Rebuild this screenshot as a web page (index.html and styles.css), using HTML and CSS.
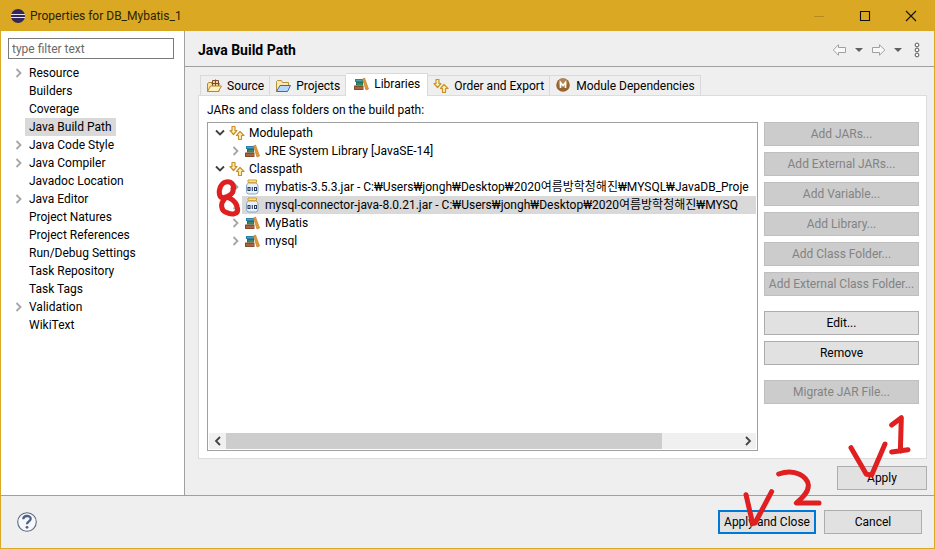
FILE: index.html
```html
<!DOCTYPE html>
<html lang="ko">
<head>
<meta charset="utf-8">
<title>Properties for DB_Mybatis_1</title>
<link rel="stylesheet" href="styles.css">
</head>
<body>
<svg class="defs" aria-hidden="true">
  <symbol id="closed" viewBox="0 0 8 10"><path d="M1.5 1l4 4-4 4" fill="none" stroke="#a6a6a6" stroke-width="1.8"/></symbol>
  <symbol id="open" viewBox="0 0 10 8"><path d="M1 1.5l4 4 4-4" fill="none" stroke="#404040" stroke-width="1.8"/></symbol>
  <symbol id="order" viewBox="0 0 16 16">
    <g fill="#fdf0b4" stroke="#c8922a" stroke-width="1.2" stroke-linejoin="round">
      <path d="M3 1.500h3v4h2L4.500 9.500 1 5.500h2z"/>
      <path d="M9.500 14.500h3v-4h2.500L11 6.500 7.500 10.500h2z"/>
    </g>
  </symbol>
  <symbol id="books" viewBox="0 0 16 16">
    <path d="M2 3h8v3H2z" fill="#2f7fa0"/><path d="M3 4.500h6" stroke="#4f9fb5"/>
    <path d="M3 6h7v3.500H3z" fill="#1f7350"/><path d="M4 8h5.500" stroke="#4f9c75"/>
    <path d="M1 9.500h9.500V14H1z" fill="#8a4c2d"/><path d="M2 12h8" stroke="#b98058"/>
    <path d="M9.500 3l2-1L15.500 13l-2.500 1z" fill="#e39a35" stroke="#c67c28" stroke-width=".7"/>
  </symbol>
  <symbol id="jar" viewBox="0 0 16 16">
    <path d="M4.500 4Q2.500 5 2.500 7v5.500Q2.500 15 5 15h6.500q2.500 0 2.500-2.500V7Q14 5 12 4z" fill="#e8f1fb" stroke="#8aa3c4"/>
    <path d="M4 1h8.500v2.400H4z" fill="#ffe79a" stroke="#cf9c32"/>
    <g fill="none" stroke="#23395f"><rect x="4" y="8.500" width="2" height="3"/><path d="M8.300 8V12"/><rect x="10.500" y="8.500" width="2" height="3"/></g>
  </symbol>
  <symbol id="source" viewBox="0 0 16 16">
    <path d="M1.500 13.500v-8l1.500-1h3l1 1h6v8z" fill="#fbe4a0" stroke="#b98532"/>
    <path d="M6.500 2.500h6v6h-6z" fill="#efd0a8" stroke="#7d4a2b"/><path d="M9.500 1.500v7M5.500 5.500h8" stroke="#7d4a2b"/>
    <path d="M1.500 13.500L4.500 8h11l-3.200 5.500z" fill="#fff0bd" stroke="#b98532"/>
  </symbol>
  <symbol id="projects" viewBox="0 0 16 16">
    <path d="M1.500 13.500v-10l1-1h4l1 2h6v3" fill="#fbe9b0" stroke="#b7903c"/>
    <path d="M1.500 13.500L5 7.500h10.500l-3 6z" fill="#b9d7f8" stroke="#3d68b8"/>
  </symbol>
  <symbol id="module" viewBox="0 0 16 16"><circle cx="8" cy="7" r="6.800" fill="#98632f"/><circle cx="8" cy="5" r="4.500" fill="#b58452"/><path d="M5.500 10V4.500L8 7.500l2.500-3V10" fill="none" stroke="#fff" stroke-width="1.600"/></symbol>
</svg>

<div class="window">
  <header class="titlebar">
    <svg class="logo" viewBox="0 0 14 14"><circle cx="7" cy="7" r="7" fill="#34285b"/><path d="M0 5.500h14M0 8.500h14" stroke="#e9e2ea" stroke-width="1.200"/></svg>
    <h1>Properties for DB_Mybatis_1</h1>
    <div class="winbtns">
      <button aria-label="Minimize" disabled><svg viewBox="0 0 12 12"><path d="M1 6.500h10" stroke="#b58a20"/></svg></button>
      <button aria-label="Maximize"><svg viewBox="0 0 12 12"><path d="M1.500 1.500h9v9h-9z" fill="none" stroke="#111" stroke-width="1.100"/></svg></button>
      <button aria-label="Close"><svg viewBox="0 0 12 12"><path d="M1 1l10 10M11 1L1 11" stroke="#111" stroke-width="1.100"/></svg></button>
    </div>
  </header>

  <div class="body">
    <nav class="sidebar">
      <input type="text" placeholder="type filter text" aria-label="Filter">
      <ul>
        <li><svg class="tw"><use href="#closed"/></svg><a href="#r">Resource</a></li>
        <li><a href="#b">Builders</a></li>
        <li><a href="#c">Coverage</a></li>
        <li><a class="current" href="#j">Java Build Path</a></li>
        <li><svg class="tw"><use href="#closed"/></svg><a href="#s">Java Code Style</a></li>
        <li><svg class="tw"><use href="#closed"/></svg><a href="#k">Java Compiler</a></li>
        <li><a href="#l">Javadoc Location</a></li>
        <li><svg class="tw"><use href="#closed"/></svg><a href="#e">Java Editor</a></li>
        <li><a href="#n">Project Natures</a></li>
        <li><a href="#p">Project References</a></li>
        <li><a href="#d">Run/Debug Settings</a></li>
        <li><a href="#t">Task Repository</a></li>
        <li><a href="#g">Task Tags</a></li>
        <li><svg class="tw"><use href="#closed"/></svg><a href="#v">Validation</a></li>
        <li><a href="#w">WikiText</a></li>
      </ul>
    </nav>

    <main>
      <div class="heading">
        <h2>Java Build Path</h2>
        <div class="tools">
          <button aria-label="Back"><svg width="15" height="12" viewBox="0 0 14 12"><path d="M.7 6L6 .8v2.700h7v5H6v2.700z" fill="#f8f8f8" stroke="#a0a0a0"/></svg></button>
          <button aria-label="Back history"><svg width="8" height="4" viewBox="0 0 8 4"><path d="M0 0h8L4 4z" fill="#606060"/></svg></button>
          <button aria-label="Forward"><svg width="15" height="12" viewBox="0 0 14 12"><path d="M13.300 6L8 .8v2.700H1v5h7v2.700z" fill="#f8f8f8" stroke="#a0a0a0"/></svg></button>
          <button aria-label="Forward history"><svg width="8" height="4" viewBox="0 0 8 4"><path d="M0 0h8L4 4z" fill="#606060"/></svg></button>
          <button aria-label="Menu"><svg width="6" height="16" viewBox="0 0 6 16"><g fill="#fff" stroke="#555"><circle cx="3" cy="3" r="1.900"/><circle cx="3" cy="8" r="1.900"/><circle cx="3" cy="13" r="1.900"/></g></svg></button>
        </div>
      </div>

      <div class="folder">
        <div class="tabs" role="tablist">
          <button role="tab"><svg><use href="#source"/></svg>Source</button>
          <button role="tab"><svg><use href="#projects"/></svg>Projects</button>
          <button role="tab" class="active" aria-selected="true"><svg><use href="#books"/></svg>Libraries</button>
          <button role="tab"><svg><use href="#order"/></svg>Order and Export</button>
          <button role="tab"><svg><use href="#module"/></svg>Module Dependencies</button>
        </div>
        <section class="panel">
          <p>JARs and class folders on the build path:</p>
          <div class="columns">
            <div class="treebox">
              <ul class="tree">
                <li><svg class="tw"><use href="#open"/></svg><span><svg><use href="#order"/></svg>Modulepath</span></li>
                <li class="sub"><svg class="tw"><use href="#closed"/></svg><span><svg><use href="#books"/></svg>JRE System Library [JavaSE-14]</span></li>
                <li><svg class="tw"><use href="#open"/></svg><span><svg><use href="#order"/></svg>Classpath</span></li>
                <li class="sub"><svg class="tw"><use href="#closed"/></svg><span><svg><use href="#jar"/></svg>mybatis-3.5.3.jar - C:₩Users₩jongh₩Desktop₩2020여름방학청해진₩MYSQL₩JavaDB_Proje</span></li>
                <li class="sub"><svg class="tw"><use href="#closed"/></svg><span class="selected"><svg><use href="#jar"/></svg>mysql-connector-java-8.0.21.jar - C:₩Users₩jongh₩Desktop₩2020여름방학청해진₩MYSQ</span></li>
                <li class="sub"><svg class="tw"><use href="#closed"/></svg><span><svg><use href="#books"/></svg>MyBatis</span></li>
                <li class="sub"><svg class="tw"><use href="#closed"/></svg><span><svg><use href="#books"/></svg>mysql</span></li>
              </ul>
              <div class="hbar">
                <button aria-label="Scroll left"><svg viewBox="0 0 8 10"><path d="M6 1L2 5l4 4" fill="none" stroke="#444" stroke-width="1.800"/></svg></button>
                <div class="track"><div class="thumb"></div></div>
                <button aria-label="Scroll right"><svg viewBox="0 0 8 10"><path d="M2 1l4 4-4 4" fill="none" stroke="#444" stroke-width="1.800"/></svg></button>
              </div>
              <svg class="mark-eight" viewBox="0 0 180 150"><path d="M71 37C67 14 41 16 32 34C23 55 29 70 42 68C55 64 73 57 69 41M44 71C29 87 34 107 48 112C66 121 88 118 82 97C78 78 58 66 45 67" /></svg>
            </div>
            <div class="actions">
              <button class="btn" disabled>Add JARs...</button>
              <button class="btn" disabled>Add External JARs...</button>
              <button class="btn" disabled>Add Variable...</button>
              <button class="btn" disabled>Add Library...</button>
              <button class="btn" disabled>Add Class Folder...</button>
              <button class="btn" disabled>Add External Class Folder...</button>
              <button class="btn group">Edit...</button>
              <button class="btn">Remove</button>
              <button class="btn group" disabled>Migrate JAR File...</button>
            </div>
          </div>
        </section>
        <div class="applyrow"><button class="btn">Apply</button></div>
      </div>
    </main>
  </div>

  <footer>
    <button class="help" aria-label="Help"><svg viewBox="0 0 20 20"><circle cx="10" cy="10" r="9.300" fill="#f6f8fb" stroke="#5a6a86" stroke-width="1.100"/><path d="M6.300 7.200C6.300 3 13.700 3 13.700 6.800C13.700 9.500 10 9.300 10 12.300" fill="none" stroke="#4f6184" stroke-width="2.300"/><circle cx="10" cy="15.300" r="1.400" fill="#4f6184"/></svg></button>
    <button class="btn default">Apply and Close</button>
    <button class="btn">Cancel</button>
  </footer>

  <svg class="mark-steps" viewBox="0 0 705 432">
    <path d="M453 128L499 208L515 210L555 117M575 60L604 38L601 139M575 141L624 134M138 269L158 356L165 354L215 260M236 207C287 189 322 216 325 240C326 264 303 281 289 294L357 294"/>
  </svg>
</div>
</body>
</html>
```
FILE: styles.css
```css
* { box-sizing: border-box; }
body { margin: 0; font: 12px/18px Roboto, "Noto Sans CJK KR", sans-serif; color: #000; }
h1, h2, p, ul { margin: 0; padding: 0; font-size: inherit; }
ul { list-style: none; }
button, input { font: inherit; color: inherit; margin: 0; }
button { padding: 0; border: 0; background: none; }
svg { display: block; flex: none; }
.defs { display: none; }

.window { position: relative; display: flex; flex-direction: column; min-height: 100vh; background: #efefef; border: 1px solid #daa822; border-top: 0; }
.titlebar { display: flex; align-items: center; height: 31px; padding-left: 10px; background: #daa822; color: #2b2205; }
.titlebar h1 { margin-left: 5px; font-weight: 400; flex: 1; }
.logo { width: 14px; height: 14px; }
.winbtns { display: flex; }
.winbtns button { width: 46px; height: 30px; display: grid; place-items: center; }
.winbtns svg { width: 12px; height: 12px; }

.body { flex: 1; display: flex; }
.sidebar { width: 184px; background: #fff; border-right: 1px solid #a0a0a0; padding: 7px 10px 0 7px; }
.sidebar input { display: block; width: 100%; height: 21px; padding: 0 3px; border: 1px solid #7a7a7a; margin-bottom: 5px; }
.sidebar input::placeholder { color: #6a6a6a; opacity: 1; }
.sidebar li { display: flex; justify-content: flex-start; align-items: center; height: 18px; padding-left: 17px; }
.sidebar a { color: inherit; text-decoration: none; padding: 0 4px; }
.sidebar .current { background: #d9d9d9; }
.tw { width: 8px; height: 10px; }
.sidebar .tw { margin-left: -10px; margin-right: 2px; }

main { flex: 1; min-width: 0; display: flex; flex-direction: column; }
.heading { display: flex; align-items: center; justify-content: space-between; height: 36px; padding: 2px 14px 0 13px; border-bottom: 1px solid #a0a0a0; }
.heading h2 { font-weight: 700; font-size: 14px; }
.tools { display: flex; align-items: center; gap: 8px; }
.tools button:last-child { margin-left: 4px; }
.folder { flex: 1; display: flex; flex-direction: column; padding: 6px 7px 5px 13px; }

.tabs { display: flex; align-items: flex-end; padding-left: 2px; }
.tabs button { display: flex; align-items: center; gap: 5px; height: 20px; padding: 0 5px; border: 1px solid #d9d9d9; border-bottom: 0; border-left-width: 0; white-space: nowrap; }
.tabs button:first-child { border-left-width: 1px; }
.tabs svg, .tree span svg { width: 16px; height: 16px; }
.tabs .active { height: 23px; margin-bottom: -1px; padding: 0 7px 2px; background: #fff; position: relative; }
.panel { flex: 1; display: flex; flex-direction: column; background: #fff; border: 1px solid #dcdcdc; padding: 5px 7px 7px 8px; }
.panel p { margin-bottom: 3px; }
.columns { flex: 1; display: flex; gap: 6px; }
.treebox { position: relative; flex: 1; min-width: 0; display: flex; flex-direction: column; border: 1px solid #a0a0a0; padding: 1px; }
.tree { flex: 1; overflow: hidden; }
.tree li { display: flex; align-items: center; height: 18px; padding-left: 6px; white-space: nowrap; }
.tree .sub { padding-left: 23px; }
.tree .tw { width: 10px; margin-right: 2px; }
.tree .sub .tw { width: 8px; margin-right: 2px; }
.tree span { display: flex; align-items: center; gap: 4px; height: 18px; padding-left: 2px; }
.tree .sub span { gap: 5px; }
.tree .selected { flex: 1; background: #d9d9d9; }
.hbar { display: flex; height: 16px; background: #f0f0f0; }
.hbar button { width: 17px; display: grid; place-items: center; }
.hbar svg { width: 8px; height: 10px; }
.track { flex: 1; display: flex; }
.thumb { width: 85%; background: #cdcdcd; }

.actions { width: 155px; display: flex; flex-direction: column; gap: 6px; }
.btn { height: 24px; border: 1px solid #adadad; background: #e1e1e1; white-space: nowrap; }
.btn:disabled { background: #ccc; border-color: #bfbfbf; color: #838383; }
.group { margin-top: 9px; }
.applyrow { display: flex; justify-content: flex-end; padding-top: 7px; }
.applyrow .btn { width: 90px; }

footer { display: flex; align-items: center; gap: 8px; height: 53px; padding: 0 12px 0 16px; border-top: 1px solid #a0a0a0; }
footer .btn { width: 98px; }
footer .default { border: 2px solid #0078d7; }
.help { margin-right: auto; }
.help svg { width: 20px; height: 20px; }

.mark-eight, .mark-steps { position: absolute; pointer-events: none; fill: none; stroke: #e02020; stroke-width: 15; stroke-linecap: round; stroke-linejoin: round; }
.mark-eight { left: 2px; top: 52px; width: 60px; height: 50px; }
.mark-steps { right: -1px; bottom: -1px; width: 235px; height: 144px; }
```
